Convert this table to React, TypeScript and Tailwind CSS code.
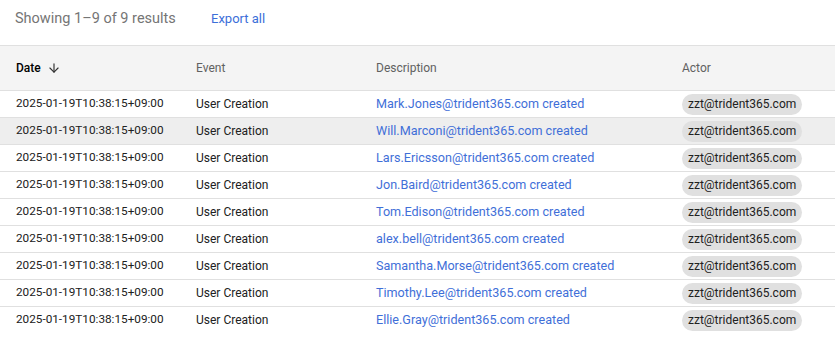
import { ArrowDown } from 'lucide-react';

const users = [
  'Mark.Jones',
  'Will.Marconi',
  'Lars.Ericsson',
  'Jon.Baird',
  'Tom.Edison',
  'alex.bell',
  'Samantha.Morse',
  'Timothy.Lee',
  'Ellie.Gray',
];

export default function App() {
  return (
    <div className="w-[835px] h-[340px] bg-white overflow-hidden font-['Roboto',sans-serif]">
      <div className="flex items-center h-[45px] pl-[15px] pb-[8px]">
        <span className="text-[14.5px] text-[#757575] w-[196px]">Showing 1–9 of 9 results</span>
        <button className="text-[13px] text-[#3c6fd9]">Export all</button>
      </div>

      <table className="w-full border-collapse text-[12px] border-t border-[#e0e0e0]">
        <thead>
          <tr className="bg-[#f4f4f4] h-[45px] border-b border-[#e0e0e0] text-left">
            <th className="w-[180px] pl-4 font-medium text-black">
              <div className="flex items-center gap-[6px]">
                Date
                <ArrowDown className="w-[14px] h-[14px] text-[#333]" strokeWidth={2} />
              </div>
            </th>
            <th className="w-[180px] pl-4 font-normal text-[#616161]">Event</th>
            <th className="w-[306px] pl-4 font-normal text-[#616161]">Description</th>
            <th className="pl-4 font-normal text-[#616161]">Actor</th>
          </tr>
        </thead>
        <tbody>
          {users.map((u, i) => (
            <tr
              key={u}
              className={`h-[27px] border-b border-[#e0e0e0] ${i === 1 ? 'bg-[#eeeeee]' : ''} ${i === users.length - 1 ? 'border-b-0' : ''}`}
            >
              <td className="pl-4 text-[11.75px] text-[#212121]">2025-01-19T10:38:15+09:00</td>
              <td className="pl-4 text-[#212121]">User Creation</td>
              <td className="pl-4 text-[12.6px] text-[#3f6fd8]">{u}@trident365.com created</td>
              <td className="pl-4">
                <span className="inline-flex items-center h-[21px] px-[6px] rounded-full bg-[#e0e0e0] text-[#212121]">
                  zzt@trident365.com
                </span>
              </td>
            </tr>
          ))}
        </tbody>
      </table>
    </div>
  );
}
